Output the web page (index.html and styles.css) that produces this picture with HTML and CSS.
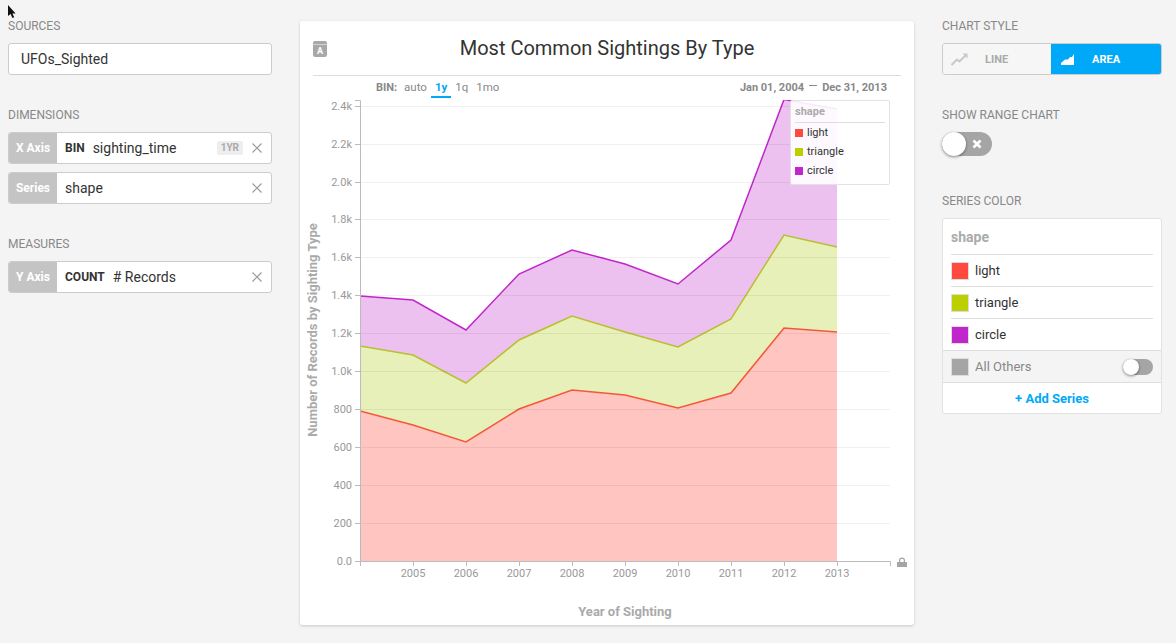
FILE: index.html
```html
<!DOCTYPE html>
<html lang="en">
<head>
  <meta charset="UTF-8">
  <title>Most Common Sightings By Type</title>
  <link rel="stylesheet" href="styles.css">
</head>
<body>

<svg class="cursor" width="12" height="16" viewBox="0 0 12 16"><path d="M1 0 L1 11 L3.6 9 L5.4 13 L7.2 12.2 L5.4 8.4 L8.6 8.4 Z" fill="#111"/></svg>

<div class="page">

  <div class="side-left">
    <div class="section">
      <div class="label">SOURCES</div>
      <div class="field source">UFOs_Sighted</div>
    </div>

    <div class="section">
      <div class="label">DIMENSIONS</div>
      <div class="pill">
        <div class="pill-tag">X Axis</div>
        <div class="pill-body">
          <b class="agg">BIN</b>
          <span>sighting_time</span>
          <span class="badge">1YR</span>
          <svg class="close" width="10" height="10" viewBox="0 0 10 10"><path d="M0.5 0.5 L9.5 9.5 M9.5 0.5 L0.5 9.5"/></svg>
        </div>
      </div>
      <div class="pill">
        <div class="pill-tag">Series</div>
        <div class="pill-body">
          <span>shape</span>
          <svg class="close" width="10" height="10" viewBox="0 0 10 10"><path d="M0.5 0.5 L9.5 9.5 M9.5 0.5 L0.5 9.5"/></svg>
        </div>
      </div>
    </div>

    <div class="section">
      <div class="label">MEASURES</div>
      <div class="pill">
        <div class="pill-tag">Y Axis</div>
        <div class="pill-body">
          <b class="agg">COUNT</b>
          <span># Records</span>
          <svg class="close" width="10" height="10" viewBox="0 0 10 10"><path d="M0.5 0.5 L9.5 9.5 M9.5 0.5 L0.5 9.5"/></svg>
        </div>
      </div>
    </div>
  </div>

  <div class="card">
    <div class="card-head">
      <div class="title-icon">A</div>
      <h1>Most Common Sightings By Type</h1>
    </div>

    <div class="bin-row">
      <b class="bin-label">BIN:</b>
      <span class="bin-opt">auto</span>
      <span class="bin-opt active">1y</span>
      <span class="bin-opt">1q</span>
      <span class="bin-opt">1mo</span>
      <div class="dates"><span>Jan 01, 2004</span><i class="dash"></i><span>Dec 31, 2013</span></div>
    </div>

    <svg class="chart" width="614" height="525" viewBox="300 100 614 525">
      <defs>
        <clipPath id="plot"><rect x="360" y="100" width="530" height="461"/></clipPath>
      </defs>

      <g clip-path="url(#plot)">
        <path class="area-circle" d="M360 296 L413 300 L466 330 L519 274 L572 250 L625 264 L678 284 L731 240 L784 99.5 L837 109 L837 247 L784 235 L731 319 L678 347 L625 332 L572 316 L519 340 L466 383 L413 355 L360 346 Z"/>
        <path class="area-triangle" d="M360 346 L413 355 L466 383 L519 340 L572 316 L625 332 L678 347 L731 319 L784 235 L837 247 L837 332 L784 328 L731 393 L678 408 L625 395 L572 390 L519 409 L466 442 L413 425 L360 411 Z"/>
        <path class="area-light" d="M360 411 L413 425 L466 442 L519 409 L572 390 L625 395 L678 408 L731 393 L784 328 L837 332 L837 561 L360 561 Z"/>
        <path class="line-circle" d="M360 296 L413 300 L466 330 L519 274 L572 250 L625 264 L678 284 L731 240 L784 99.5 L837 109"/>
        <path class="line-triangle" d="M360 346 L413 355 L466 383 L519 340 L572 316 L625 332 L678 347 L731 319 L784 235 L837 247"/>
        <path class="line-light" d="M360 411 L413 425 L466 442 L519 409 L572 390 L625 395 L678 408 L731 393 L784 328 L837 332"/>
      </g>

      <path class="grid" d="M361 523.5H890 M361 485.5H890 M361 447.5H890 M361 409.5H890 M361 371.5H890 M361 333.5H890 M361 295.5H890 M361 257.5H890 M361 219.5H890 M361 182.5H890 M361 144.5H890 M361 106.5H890"/>

      <path class="axis" d="M355 100.5H360.5V561.5H355 M360.5 561.5V566 M355 523.5H360 M355 485.5H360 M355 447.5H360 M355 409.5H360 M355 371.5H360 M355 333.5H360 M355 295.5H360 M355 257.5H360 M355 219.5H360 M355 182.5H360 M355 144.5H360 M355 106.5H360"/>
      <path class="axis" d="M360.5 561.5H890.5V566 M413.5 561.5V566 M466.5 561.5V566 M519.5 561.5V566 M572.5 561.5V566 M625.5 561.5V566 M678.5 561.5V566 M731.5 561.5V566 M784.5 561.5V566 M837.5 561.5V566"/>

      <g class="tick-y">
        <text x="352" y="565">0.0</text>
        <text x="352" y="527">200</text>
        <text x="352" y="489">400</text>
        <text x="352" y="451">600</text>
        <text x="352" y="413">800</text>
        <text x="352" y="375">1.0k</text>
        <text x="352" y="337">1.2k</text>
        <text x="352" y="299">1.4k</text>
        <text x="352" y="261">1.6k</text>
        <text x="352" y="223">1.8k</text>
        <text x="352" y="186">2.0k</text>
        <text x="352" y="148">2.2k</text>
        <text x="352" y="110">2.4k</text>
      </g>
      <g class="tick-x">
        <text x="413" y="577">2005</text>
        <text x="466" y="577">2006</text>
        <text x="519" y="577">2007</text>
        <text x="572" y="577">2008</text>
        <text x="625" y="577">2009</text>
        <text x="678" y="577">2010</text>
        <text x="731" y="577">2011</text>
        <text x="784" y="577">2012</text>
        <text x="837" y="577">2013</text>
      </g>

      <text class="axis-title" transform="translate(317 330) rotate(-90)">Number of Records by Sighting Type</text>
      <text class="axis-title" x="625" y="616">Year of Sighting</text>

      <path class="lock" d="M897.5 562 H906.5 a0.5 0.5 0 0 1 0.5 0.5 V567 H897 V562.5 a0.5 0.5 0 0 1 0.5 -0.5 Z M899 562 V560.5 a3 3 0 0 1 6 0 V562 H903.8 V560.5 a1.8 1.8 0 0 0 -3.6 0 V562 Z"/>
    </svg>

    <div class="legend">
      <div class="legend-head">shape</div>
      <div class="legend-row"><i class="dot c-light"></i>light</div>
      <div class="legend-row"><i class="dot c-triangle"></i>triangle</div>
      <div class="legend-row"><i class="dot c-circle"></i>circle</div>
    </div>
  </div>

  <div class="side-right">
    <div class="section">
      <div class="label">CHART STYLE</div>
      <div class="segmented">
        <div class="seg">
          <svg width="17" height="13" viewBox="0 0 17 13"><path d="M0.5 12 L6 6.5 L8.5 8.5 L14.5 2.5" fill="none" stroke="#c8c8c8" stroke-width="2"/><path d="M11.5 0.5 H16.5 V5.5 Z" fill="#c8c8c8"/></svg>
          <span>LINE</span>
        </div>
        <div class="seg on">
          <svg width="14" height="11" viewBox="0 0 14 11"><path d="M0 11 L0 9 L4 5.5 L7 5.5 L9 3 L11 3 L13 0 L13 11 Z" fill="#fff"/></svg>
          <span>AREA</span>
        </div>
      </div>
    </div>

    <div class="section range">
      <div class="label">SHOW RANGE CHART</div>
      <div class="switch">
        <div class="knob"></div>
        <svg width="10" height="10" viewBox="0 0 10 10"><path d="M1.5 1.5 L8.5 8.5 M8.5 1.5 L1.5 8.5" stroke="#fff" stroke-width="2.6"/></svg>
      </div>
    </div>

    <div class="section">
      <div class="label">SERIES COLOR</div>
      <div class="panel">
        <div class="panel-inner">
          <div class="panel-head">shape</div>
          <div class="panel-row"><i class="swatch c-light"></i>light</div>
          <div class="panel-row"><i class="swatch c-triangle"></i>triangle</div>
          <div class="panel-row"><i class="swatch c-circle"></i>circle</div>
        </div>
        <div class="others">
          <i class="swatch c-others"></i>
          <span>All Others</span>
          <div class="switch small"><div class="knob"></div></div>
        </div>
        <div class="add-series">+ Add Series</div>
      </div>
    </div>
  </div>

</div>

</body>
</html>
```

FILE: styles.css
```css
html {
  font-family: Roboto, sans-serif;
}

body {
  margin: 0;
  background: #f4f4f4;
  color: #333;
}

.cursor {
  position: absolute;
  left: 7px;
  top: 5px;
}

.page {
  display: grid;
  grid-template-columns: 264px 614px 220px;
  column-gap: 28px;
  padding: 19px 0 0 8px;
  height: 624px;
  overflow: hidden;
}

.section {
  margin-bottom: 33px;
}

.section.range {
  margin-bottom: 38px;
}

.label {
  font-size: 12px;
  line-height: 14px;
  color: #888;
  margin-bottom: 10px;
}

/* left column */

.field {
  height: 32px;
  box-sizing: border-box;
  background: #fff;
  border: 1px solid #ccc;
  border-radius: 3px;
  font-size: 14px;
  line-height: 30px;
}

.source {
  padding-left: 12px;
}

.pill {
  display: flex;
  height: 32px;
  box-sizing: border-box;
  background: #fff;
  border: 1px solid #ccc;
  border-radius: 3px;
  overflow: hidden;
  margin-bottom: 8px;
  font-size: 14px;
}

.pill:last-child {
  margin-bottom: 0;
}

.pill-tag {
  width: 48px;
  flex: none;
  background: #c4c4c4;
  color: #fff;
  font-size: 12px;
  font-weight: 700;
  line-height: 30px;
  text-align: center;
}

.pill-body {
  flex: 1;
  display: flex;
  align-items: center;
  padding: 0 9px 0 8px;
}

.agg {
  font-size: 12px;
  color: #333;
  margin-right: 8px;
}

.badge {
  margin-left: auto;
  background: #eee;
  color: #aaa;
  font-size: 10px;
  font-weight: 700;
  line-height: 14px;
  padding: 0 4px;
  border-radius: 2px;
}

.close {
  margin-left: auto;
  fill: none;
  stroke: #999;
  stroke-width: 1.2;
}

.badge + .close {
  margin-left: 9px;
}

/* chart card */

.card {
  position: relative;
  height: 604px;
  margin-top: 2px;
  background: #fff;
  border-radius: 3px;
  box-shadow: 0 1px 3px rgba(0, 0, 0, .18);
}

.card-head {
  position: relative;
  height: 54px;
  margin: 0 13px;
  border-bottom: 1px solid #ddd;
  display: flex;
  align-items: center;
  justify-content: center;
}

.card-head h1 {
  margin: 0;
  font-size: 20px;
  font-weight: 400;
  color: #333;
}

.title-icon {
  position: absolute;
  left: 0;
  top: 20px;
  width: 14px;
  height: 16px;
  background: #a8a8a8;
  border-radius: 2px;
  color: #fff;
  font-size: 9px;
  font-weight: 700;
  line-height: 21px;
  text-align: center;
}

.title-icon::before {
  content: "";
  position: absolute;
  left: 0;
  right: 0;
  top: 3px;
  height: 1px;
  background: #d4d4d4;
}

.bin-row {
  display: flex;
  align-items: flex-start;
  height: 24px;
  box-sizing: border-box;
  padding: 3px 27px 0 76px;
  font-size: 11.5px;
  line-height: 17px;
  color: #888;
}

.bin-label {
  font-size: 11px;
  margin-right: 7px;
}

.bin-opt {
  margin-right: 8px;
  border-bottom: 2px solid transparent;
}

.bin-opt.active {
  color: #00a8f5;
  font-weight: 700;
  border-bottom-color: #00a8f5;
  padding: 0 4px;
  margin: 0 4px 0 -4px;
}

.dates {
  margin-left: auto;
  display: flex;
  align-items: center;
  font-size: 11px;
  font-weight: 700;
  color: #888;
}

.dash {
  width: 8px;
  height: 1px;
  background: #888;
  margin: 0 5px;
  position: relative;
  top: -2px;
}

.chart {
  display: block;
}

.area-light { fill: #ffc5c0; }
.area-triangle { fill: #e6f0b8; }
.area-circle { fill: #ecc1ef; }

.line-light,
.line-triangle,
.line-circle {
  fill: none;
  stroke-width: 1.5;
}

.line-light { stroke: #f4583a; }
.line-triangle { stroke: #b9bf2e; }
.line-circle { stroke: #c026c9; }

.grid {
  fill: none;
  stroke: rgba(0, 0, 0, .06);
}

.axis {
  fill: none;
  stroke: #bbb;
}

.tick-y text,
.tick-x text {
  font-size: 11px;
  fill: #999;
}

.tick-y text {
  text-anchor: end;
}

.tick-x text {
  text-anchor: middle;
}

.axis-title {
  font-size: 13px;
  font-weight: 700;
  fill: #aaa;
  text-anchor: middle;
}

.lock {
  fill: #a5a5a5;
}

.legend {
  position: absolute;
  left: 490px;
  top: 79px;
  width: 100px;
  height: 85px;
  box-sizing: border-box;
  padding: 0 4px;
  background: rgba(255, 255, 255, .9);
  border: 1px solid #e2e2e2;
  border-radius: 2px;
  font-size: 11px;
  color: #333;
}

.legend-head {
  height: 21px;
  line-height: 22px;
  font-weight: 700;
  color: #aaa;
  border-bottom: 1px solid #ddd;
}

.legend-row {
  display: flex;
  align-items: center;
  height: 19px;
}

.dot {
  width: 8px;
  height: 8px;
  margin-right: 4px;
}

.c-light { background: #ff4a3d; }
.c-triangle { background: #bcd000; }
.c-circle { background: #c026cc; }
.c-others { background: #a5a5a5; }

/* right column */

.segmented {
  display: flex;
  height: 32px;
  box-sizing: border-box;
  border: 1px solid #ccc;
  border-radius: 3px;
  overflow: hidden;
}

.seg {
  width: 108px;
  display: flex;
  align-items: center;
  font-size: 11px;
  font-weight: 700;
  color: #aaa;
  padding-left: 8px;
  box-sizing: border-box;
  background: #f6f6f6;
}

.seg span {
  margin-left: 17px;
}

.seg.on {
  flex: 1;
  background: #00a9f7;
  color: #fff;
  padding-left: 10px;
  margin: -1px -1px -1px 0;
}

.switch {
  position: relative;
  width: 50px;
  height: 24px;
  background: #a5a5a5;
  border-radius: 12px;
}

.switch svg {
  position: absolute;
  left: 30px;
  top: 7px;
}

.knob {
  position: absolute;
  left: 0;
  top: 0;
  width: 24px;
  height: 24px;
  background: #fff;
  border-radius: 50%;
  box-shadow: 0 1px 3px rgba(0, 0, 0, .45);
}

.switch.small {
  width: 30px;
  height: 16px;
  border-radius: 8px;
  margin-left: auto;
}

.switch.small .knob {
  width: 16px;
  height: 16px;
}

.panel {
  background: #fff;
  border: 1px solid #e2e2e2;
  border-radius: 3px;
  font-size: 13px;
  height: 196px;
  box-sizing: border-box;
  overflow: hidden;
}

.panel-inner {
  padding: 0 8px;
}

.panel-head {
  height: 35px;
  line-height: 37px;
  font-size: 14px;
  font-weight: 700;
  color: #aaa;
  border-bottom: 1px solid #ddd;
}

.panel-row {
  display: flex;
  align-items: center;
  height: 31px;
  border-bottom: 1px solid #ddd;
}

.panel-row:last-child {
  border-bottom: 0;
}

.swatch {
  width: 18px;
  height: 18px;
  box-sizing: border-box;
  border: 1px solid #ddd;
  margin-right: 6px;
  flex: none;
}

.others {
  display: flex;
  align-items: center;
  height: 33px;
  box-sizing: border-box;
  padding: 0 8px;
  background: #f4f4f4;
  border-top: 1px solid #ddd;
  border-bottom: 1px solid #ddd;
  color: #888;
}

.add-series {
  text-align: center;
  font-size: 13px;
  font-weight: 700;
  line-height: 31px;
  color: #00a9f7;
}
```
